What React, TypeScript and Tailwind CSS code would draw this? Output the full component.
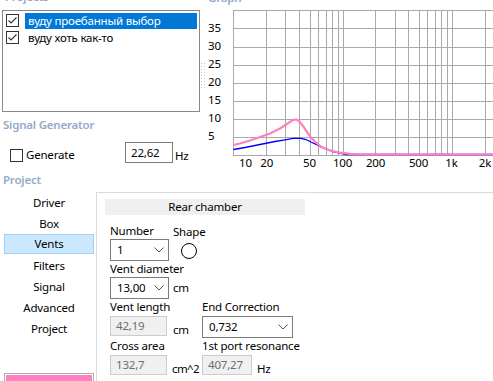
import React from "react";

const LABEL = "font-semibold text-[#93a9c9]";

function Check({ checked }: { checked?: boolean }) {
  return (
    <div className="w-[13px] h-[13px] shrink-0 border border-[#333333] bg-white flex items-center justify-center">
      {checked && (
        <svg width="11" height="11" viewBox="0 0 11 11">
          <polyline points="1.5,5.5 4,8 9.5,2.5" fill="none" stroke="#333333" strokeWidth="1.1" />
        </svg>
      )}
    </div>
  );
}

function Item({ text, selected }: { text: string; selected?: boolean }) {
  return (
    <div className="flex items-center h-[17px]">
      <div className="ml-[3px]">
        <Check checked />
      </div>
      <div
        className={
          selected
            ? "ml-[6px] mr-[2px] flex-1 h-[16px] bg-[#0078d7] text-white pl-[3px] leading-[16px]"
            : "ml-[6px] mr-[2px] flex-1 h-[16px] pl-[3px] leading-[16px]"
        }
      >
        {text}
      </div>
    </div>
  );
}

function Chevron() {
  return (
    <svg width="10" height="6" viewBox="0 0 10 6" className="shrink-0">
      <polyline points="0.5,0.5 5,5 9.5,0.5" fill="none" stroke="#555555" strokeWidth="1" />
    </svg>
  );
}

function Combo({ value, className }: { value: string; className: string }) {
  return (
    <div className={className + " h-[22px] border border-[#7a7a7a] bg-white flex items-center justify-between pl-[6px] pr-[4px]"}>
      <span>{value}</span>
      <Chevron />
    </div>
  );
}

function Disabled({ value, className }: { value: string; className: string }) {
  return (
    <div className={className + " h-[20px] border border-[#cccccc] bg-[#f0f0f0] text-[#6d6d6d] flex items-center pl-[5px]"}>
      {value}
    </div>
  );
}

const freqs = [10, 20, 30, 40, 50, 60, 70, 80, 90, 100, 200, 300, 400, 500, 600, 700, 800, 900, 1000, 2000];
const fx = (f: number) => Math.round(233.3 + Math.log10(f / 10) * 109.2) + 0.5;
const hy = [10, 28, 47, 65, 83, 101, 119, 137, 155];
const yl: [string, number][] = [
  ["35", 28.5],
  ["30", 46.7],
  ["25", 64.8],
  ["20", 83],
  ["15", 101.2],
  ["10", 119.3],
  ["5", 137.3],
];
const xl: [string, number][] = [
  ["20", 266.7],
  ["50", 309.5],
  ["100", 342.5],
  ["200", 375.5],
  ["500", 418.5],
  ["1k", 451.5],
  ["2k", 485],
];

const pink =
  "233.5,145 240,143.5 250,140.5 260,137 270,133.5 280,128.5 287,124 292,120.5 296,119.5 299,121 303,126 307,132 311,137.5 316,142.5 321,146.5 326,149 332,151 340,152.7 350,153.8 362,154.5 493,154.5";
const blue =
  "233.5,149.5 245,147.5 255,145.5 265,143.5 275,141.5 285,139.8 293,138.3 301,138.3 306,139.5 311,142 316,144.3 321,147 327,149.5 333,151.5 340,153 346,154.5 493,154.5";

function Graph() {
  return (
    <svg width="287" height="170" viewBox="206 0 287 170" className="shrink-0" style={{ fontFamily: "'Noto Sans', sans-serif" }}>
      <text x="208" y="2" fontSize="11.5" fontWeight="600" fill="#93a9c9">
        Graph
      </text>
      {hy.map((y) => (
        <line key={"h" + y} x1="233" x2="493" y1={y + 0.5} y2={y + 0.5} stroke="#a9a9a9" strokeWidth="1" />
      ))}
      {freqs.map((f) => (
        <line key={"v" + f} x1={fx(f)} x2={fx(f)} y1="10" y2="156" stroke="#a9a9a9" strokeWidth="1" />
      ))}
      <polyline points={blue} fill="none" stroke="#0000ff" strokeWidth="1.3" />
      <polyline points={pink} fill="none" stroke="#ff80c0" strokeWidth="2.2" />
      {yl.map(([t, y]) => (
        <text key={"y" + t} x="208" y={y} fontSize="11.5" dominantBaseline="middle" fill="#000">
          {t}
        </text>
      ))}
      <text x="239" y="163.5" fontSize="11.5" dominantBaseline="middle" fill="#000">
        10
      </text>
      {xl.map(([t, x]) => (
        <text key={"x" + t} x={x} y="163.5" fontSize="11.5" textAnchor="middle" dominantBaseline="middle" fill="#000">
          {t}
        </text>
      ))}
    </svg>
  );
}

const navItems = ["Driver", "Box", "Vents", "Filters", "Signal", "Advanced", "Project"];

export default function App() {
  return (
    <div className="w-[493px] h-[381px] overflow-hidden bg-white text-[11.5px] tracking-[-0.2px] leading-[16px] text-black font-['Noto_Sans',sans-serif]">
      <div className="flex h-[170px]">
        <div className="w-[200px] shrink-0">
          <div className={"-mt-[11px] ml-[5px] h-[16px] " + LABEL}>Projects</div>
          <div className="mt-[5px] ml-[2px] w-[198px] h-[102px] border border-[#828790] pt-[1px]">
            <Item selected text="вуду проебанный выбор" />
            <Item text="вуду хоть как-то" />
          </div>
          <div className={"mt-[5px] ml-[3px] h-[16px] " + LABEL}>Signal Generator</div>
          <div className="mt-[9px] flex items-start h-[21px]">
            <div className="flex items-center mt-[5px] ml-[10px] w-[115px]">
              <Check />
              <span className="ml-[3px]">Generate</span>
            </div>
            <div className="w-[48px] h-[21px] border border-[#7a7a7a] flex items-center pl-[5px]">22,62</div>
            <span className="ml-[2px] mt-[6px]">Hz</span>
          </div>
        </div>
        <div className="w-[6px] shrink-0 mt-[62px] h-[28px] bg-[radial-gradient(#c4c4c4_0.8px,transparent_1px)] bg-[length:3px_3px]" />
        <Graph />
      </div>
      <div className={"mt-[2px] ml-[3px] h-[16px] " + LABEL}>Project</div>
      <div className="mt-[4px] flex">
        <div className="w-[96px] shrink-0">
          {navItems.map((n) =>
            n === "Vents" ? (
              <div key={n} className="ml-[4px] w-[90px] h-[20px] mb-[1px] bg-[#cce8ff] border border-[#99d1ff] flex items-center justify-center">
                {n}
              </div>
            ) : (
              <div key={n} className="ml-[4px] w-[90px] h-[21px] flex items-center justify-center">
                {n}
              </div>
            )
          )}
          <div className="mt-[34px] ml-[4px] w-[90px] h-[20px] border border-[#adadad] p-[1px]">
            <div className="w-full h-full bg-[#ff80c0]" />
          </div>
        </div>
        <div className="flex-1 h-[189px] border-l border-t border-[#dadada] pl-[8px] pt-[6px]">
          <div className="w-[200px] h-[16px] bg-[#f0f0f0] text-center leading-[16px]">Rear chamber</div>
          <div className="ml-[5px] mt-[8px]">
            <div className="flex">
              <div className="w-[63px]">
                <div className="h-[16px]">Number</div>
                <Combo value="1" className="w-[59px]" />
              </div>
              <div>
                <div className="h-[16px] mt-[1px]">Shape</div>
                <div className="ml-[8px] mt-[3px] w-[16px] h-[16px] rounded-full border border-black" />
              </div>
            </div>
            <div className="h-[16px]">Vent diameter</div>
            <div className="flex items-center">
              <Combo value="13,00" className="w-[59px]" />
              <span className="ml-[4px]">cm</span>
            </div>
            <div className="flex">
              <div className="w-[92px]">
                <div className="h-[16px]">Vent length</div>
                <div className="flex items-start mt-[1px]">
                  <Disabled value="42,19" className="w-[57px]" />
                  <span className="ml-[6px] mt-[6px]">cm</span>
                </div>
              </div>
              <div>
                <div className="h-[16px]">End Correction</div>
                <Combo value="0,732" className="w-[91px] mt-[1px]" />
              </div>
            </div>
            <div className="flex">
              <div className="w-[92px]">
                <div className="h-[16px]">Cross area</div>
                <div className="flex items-start mt-[1px]">
                  <Disabled value="132,7" className="w-[57px]" />
                  <span className="ml-[5px] mt-[6px] tracking-[-0.6px]">cm^2</span>
                </div>
              </div>
              <div>
                <div className="h-[16px]">1st port resonance</div>
                <div className="flex items-start mt-[1px]">
                  <Disabled value="407,27" className="w-[50px]" />
                  <span className="ml-[5px] mt-[6px]">Hz</span>
                </div>
              </div>
            </div>
          </div>
        </div>
      </div>
    </div>
  );
}
